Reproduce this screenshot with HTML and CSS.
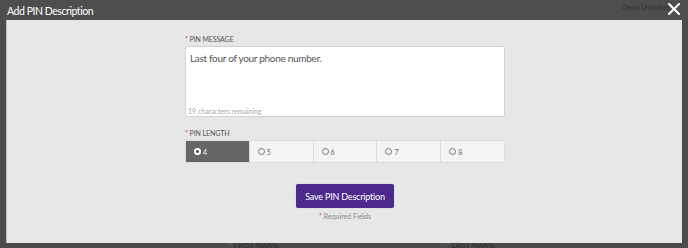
FILE: index.html
```html
<!DOCTYPE html>
<html lang="en">
<head>
  <meta charset="UTF-8" />
  <title>Add PIN Description</title>
  <link rel="stylesheet" href="styles.css">
</head>
<body>
  <div class="modal">
    <div class="modal-head">
      <span class="modal-title">Add PIN Description</span>
      <span class="behind-text">Demo Unlimited</span>
      <svg class="close" width="12" height="12" viewBox="0 0 12 12" aria-label="Close">
        <path d="M1 1 L11 11 M11 1 L1 11" stroke="#fff" stroke-width="2" stroke-linecap="square" />
      </svg>
    </div>

    <div class="modal-body">
      <form class="pin-form">
        <label class="field-label"><span class="req">*</span> PIN MESSAGE</label>
        <div class="textbox">
          <div class="textbox-text">Last four of your phone number.</div>
          <div class="remaining">19 characters remaining</div>
        </div>

        <label class="field-label second"><span class="req">*</span> PIN LENGTH</label>
        <div class="lengths">
          <div class="opt active"><span class="radio"></span>4</div>
          <div class="opt"><span class="radio"></span>5</div>
          <div class="opt"><span class="radio"></span>6</div>
          <div class="opt"><span class="radio"></span>7</div>
          <div class="opt"><span class="radio"></span>8</div>
        </div>

        <div class="actions">
          <button type="button" class="save-btn">Save PIN Description</button>
          <div class="required-note"><span class="req">*</span> Required Fields</div>
        </div>
      </form>
    </div>

    <div class="under">
      <span class="under-left"><span class="req">*</span> FIRST NAME</span>
      <span class="under-right"><span class="req">*</span> LAST NAME</span>
    </div>
  </div>
</body>
</html>
```

FILE: styles.css
```css
* { box-sizing: border-box; }
body {
  margin: 0;
  font-family: Lato, 'Open Sans', sans-serif;
  background-color: #4b4b4b;
  width: 688px;
  height: 248px;
  overflow: hidden;
}
.modal {
  display: flex;
  flex-direction: column;
  height: 248px;
}
.modal-head {
  height: 20px;
  display: flex;
  align-items: center;
  padding: 0 7px;
  position: relative;
  background-color: #4e4e4e;
}
.modal-title {
  color: #fff;
  font-size: 10.5px;
  letter-spacing: -0.45px;
  margin-top: 1px;
}
.behind-text {
  position: absolute;
  right: 19px;
  top: 3px;
  font-size: 7px;
  letter-spacing: -0.2px;
  color: #2e2e2e;
}
.close {
  position: absolute;
  right: 8px;
  top: 3px;
}
.modal-body {
  height: 223px;
  margin: 0 6px;
  background-color: #e7e7e7;
  border-left: 1px solid #bdbdbd;
  display: flex;
  justify-content: center;
}
.pin-form {
  width: 320px;
  margin-left: 1px;
  padding-top: 15px;
  display: flex;
  flex-direction: column;
}
.field-label {
  font-size: 7px;
  letter-spacing: -0.1px;
  color: #555;
  line-height: 9px;
  height: 10px;
  margin-bottom: 1px;
}
.field-label.second {
  margin-top: 12px;
}
.req {
  color: #d9443b;
}
.textbox {
  height: 71px;
  background-color: #fff;
  border: 1px solid #d2d2d2;
  border-radius: 2px;
  padding: 5px 2px 1px 4px;
  display: flex;
  flex-direction: column;
  justify-content: space-between;
}
.textbox-text {
  font-size: 10px;
  letter-spacing: -0.3px;
  color: #555;
}
.remaining {
  font-size: 7px;
  margin-left: -2px;
  color: #a8a8a8;
}
.lengths {
  display: flex;
  height: 23px;
  border: 1px solid #dcdcdc;
  border-radius: 2px;
  background-color: #f4f4f4;
}
.opt {
  flex: 1;
  display: flex;
  align-items: center;
  padding-left: 8px;
  font-size: 7px;
  color: #666;
  border-left: 1px solid #dcdcdc;
}
.opt:first-child {
  border-left: none;
}
.opt.active {
  background-color: #666;
  color: #fff;
}
.radio {
  width: 7px;
  height: 7px;
  border: 1px solid #777;
  border-radius: 50%;
  margin-right: 2px;
  display: inline-block;
}
.opt.active .radio {
  border: none;
  background: radial-gradient(circle, #555 0 1.3px, #fff 1.6px);
}
.actions {
  margin-top: 21px;
  display: flex;
  flex-direction: column;
  align-items: center;
}
.save-btn {
  width: 98px;
  height: 24px;
  background-color: #4b2a8c;
  color: #fff;
  border: none;
  border-radius: 2px;
  font-family: Lato, sans-serif;
  font-size: 9px;
  letter-spacing: -0.2px;
  padding: 0;
  box-shadow: 0 0 1px rgba(0, 0, 0, 0.3);
}
.required-note {
  margin-top: 4px;
  font-size: 7px;
  color: #888;
}
.under {
  height: 5px;
  position: relative;
  overflow: hidden;
  background-color: #4b4b4b;
  font-size: 8px;
  color: #2f2f2f;
}
.under-left {
  position: absolute;
  left: 228px;
  top: -3px;
}
.under-right {
  position: absolute;
  left: 446px;
  top: -3px;
}
```
